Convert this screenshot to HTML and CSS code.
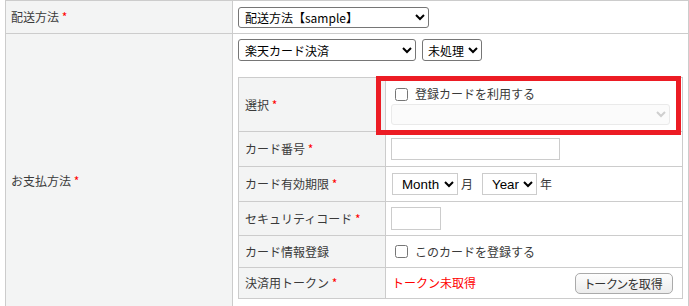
FILE: index.html
```html
<!DOCTYPE html>
<html lang="ja">
<head>
  <meta charset="UTF-8">
  <title>受注登録</title>
  <link rel="stylesheet" href="styles.css">
</head>
<body>
  <div id="order-form">
    <table class="form-table">
      <colgroup>
        <col class="col-label">
        <col>
      </colgroup>
      <tr class="row-delivery">
        <th>配送方法 <span class="req">*</span></th>
        <td>
          <select class="select sel-delivery">
            <option>配送方法【sample】</option>
          </select>
        </td>
      </tr>
      <tr class="row-payment">
        <th>お支払方法 <span class="req">*</span></th>
        <td>
          <div class="payment-selects">
            <select class="select sel-payment">
              <option>楽天カード決済</option>
            </select>
            <select class="select sel-status">
              <option>未処理</option>
            </select>
          </div>

          <table class="card-table">
            <colgroup>
              <col class="col-card-label">
              <col>
            </colgroup>
            <tr class="row-choose">
              <th>選択 <span class="req">*</span></th>
              <td>
                <label class="check-line">
                  <input type="checkbox">登録カードを利用する
                </label>
                <select class="select sel-card" disabled>
                  <option></option>
                </select>
              </td>
            </tr>
            <tr class="row-number">
              <th>カード番号 <span class="req">*</span></th>
              <td><input type="text" class="text-input input-number"></td>
            </tr>
            <tr class="row-expire">
              <th>カード有効期限 <span class="req">*</span></th>
              <td>
                <div class="expire">
                  <select class="select sel-date sel-month">
                    <option>Month</option>
                  </select>
                  <span class="unit unit-month">月</span>
                  <select class="select sel-date sel-year">
                    <option>Year</option>
                  </select>
                  <span class="unit">年</span>
                </div>
              </td>
            </tr>
            <tr class="row-security">
              <th>セキュリティコード <span class="req">*</span></th>
              <td><input type="text" class="text-input input-security"></td>
            </tr>
            <tr class="row-register">
              <th>カード情報登録</th>
              <td>
                <label class="check-line">
                  <input type="checkbox">このカードを登録する
                </label>
              </td>
            </tr>
            <tr class="row-token">
              <th>決済用トークン <span class="req">*</span></th>
              <td>
                <div class="token">
                  <span class="token-status">トークン未取得</span>
                  <button type="button" class="token-button">トークンを取得</button>
                </div>
              </td>
            </tr>
          </table>
        </td>
      </tr>
    </table>

    <!-- 説明用の赤枠 -->
    <div class="highlight"></div>
  </div>
</body>
</html>
```

FILE: styles.css
```css
html {
  overflow: hidden;
}

body {
  margin: 0;
  font-family: "Noto Sans CJK JP", sans-serif;
  font-size: 12px;
  color: #3a3a3a;
  background: #fff;
}

#order-form {
  position: relative;
  padding-left: 5px;
}

.form-table,
.card-table {
  width: 100%;
  border-collapse: collapse;
  table-layout: fixed;
}

.form-table th,
.form-table td {
  border: 1px solid #ccc;
  padding: 5px;
  line-height: 18px;
}

.form-table th {
  background: #f3f4f4;
  font-weight: normal;
  text-align: left;
  vertical-align: middle;
}

.form-table td {
  background: #fff;
}

.col-label {
  width: 227px;
}

.row-delivery th,
.row-delivery td {
  height: 22px;
}

.row-payment > td {
  vertical-align: top;
}

.req {
  color: #f00;
}

/* selects */
.select {
  font-family: "Noto Sans CJK JP", sans-serif;
  font-size: 12px;
  color: #000;
  background: #fff;
  border: 1px solid #767676;
  border-radius: 3px;
  height: 22px;
  padding: 0 0 0 2px;
  margin: 0;
}

.sel-delivery {
  width: 191px;
  height: 21px;
}

.payment-selects {
  display: flex;
  gap: 6px;
}

.sel-payment {
  width: 178px;
}

.sel-status {
  width: 60px;
  padding-left: 1px;
}

/* card table */
.card-table {
  margin: 16px 0 23px;
}

.col-card-label {
  width: 147px;
}

.card-table th {
  padding: 0 6px;
}

.card-table td {
  padding: 0 5px;
  vertical-align: middle;
}

.row-choose th {
  height: 53px;
}

.row-choose td {
  height: 41px;
  padding-top: 6px;
  padding-bottom: 6px;
}

.row-number th,
.row-number td,
.row-expire th,
.row-expire td {
  height: 34px;
}

.row-security th,
.row-security td {
  height: 33px;
}

.row-register th,
.row-register td {
  height: 31px;
}

.row-token th,
.row-token td {
  height: 30px;
}

.check-line {
  display: flex;
  align-items: center;
  height: 19px;
}

.check-line input {
  width: 13px;
  height: 13px;
  margin: 3px 7px 3px 4px;
}

.sel-card {
  display: block;
  width: 279px;
  height: 21px;
}

.sel-card:disabled {
  color: #bbb;
  background: #fafafa;
  border-color: #e2e2e2;
}

.text-input {
  display: block;
  box-sizing: border-box;
  border: 1px solid #ccc;
  margin: 0;
  padding: 0 3px;
  background: #fff;
}

.input-number {
  width: 169px;
  height: 22px;
}

.input-security {
  width: 50px;
  height: 23px;
}

.expire {
  display: flex;
  align-items: center;
}

.sel-date {
  font-family: "Liberation Sans", Arial, sans-serif;
  font-size: 13.33px;
  border: 1px solid #ccc;
  border-radius: 0;
  padding: 0 0 0 5px;
}

.sel-month {
  width: 66px;
  margin-left: 1px;
}

.sel-year {
  width: 55px;
}

.unit {
  margin: 0 6px 0 3px;
}

.unit-month {
  margin-right: 9px;
}

.token {
  display: flex;
  align-items: center;
  justify-content: space-between;
}

.token-status {
  color: #f00;
  margin-left: 1px;
}

.token-button {
  font-family: "Noto Sans CJK JP", sans-serif;
  font-feature-settings: "palt";
  font-size: 12px;
  color: #333;
  width: 98px;
  height: 21px;
  padding: 0;
  margin-right: 4px;
  border: 1px solid #aaa;
  border-radius: 5px;
  background: linear-gradient(#fdfdfd, #ececec);
}

.highlight {
  position: absolute;
  left: 376px;
  top: 76px;
  width: 305px;
  height: 59px;
  box-sizing: border-box;
  border: 5px solid #ec1c24;
}
```
